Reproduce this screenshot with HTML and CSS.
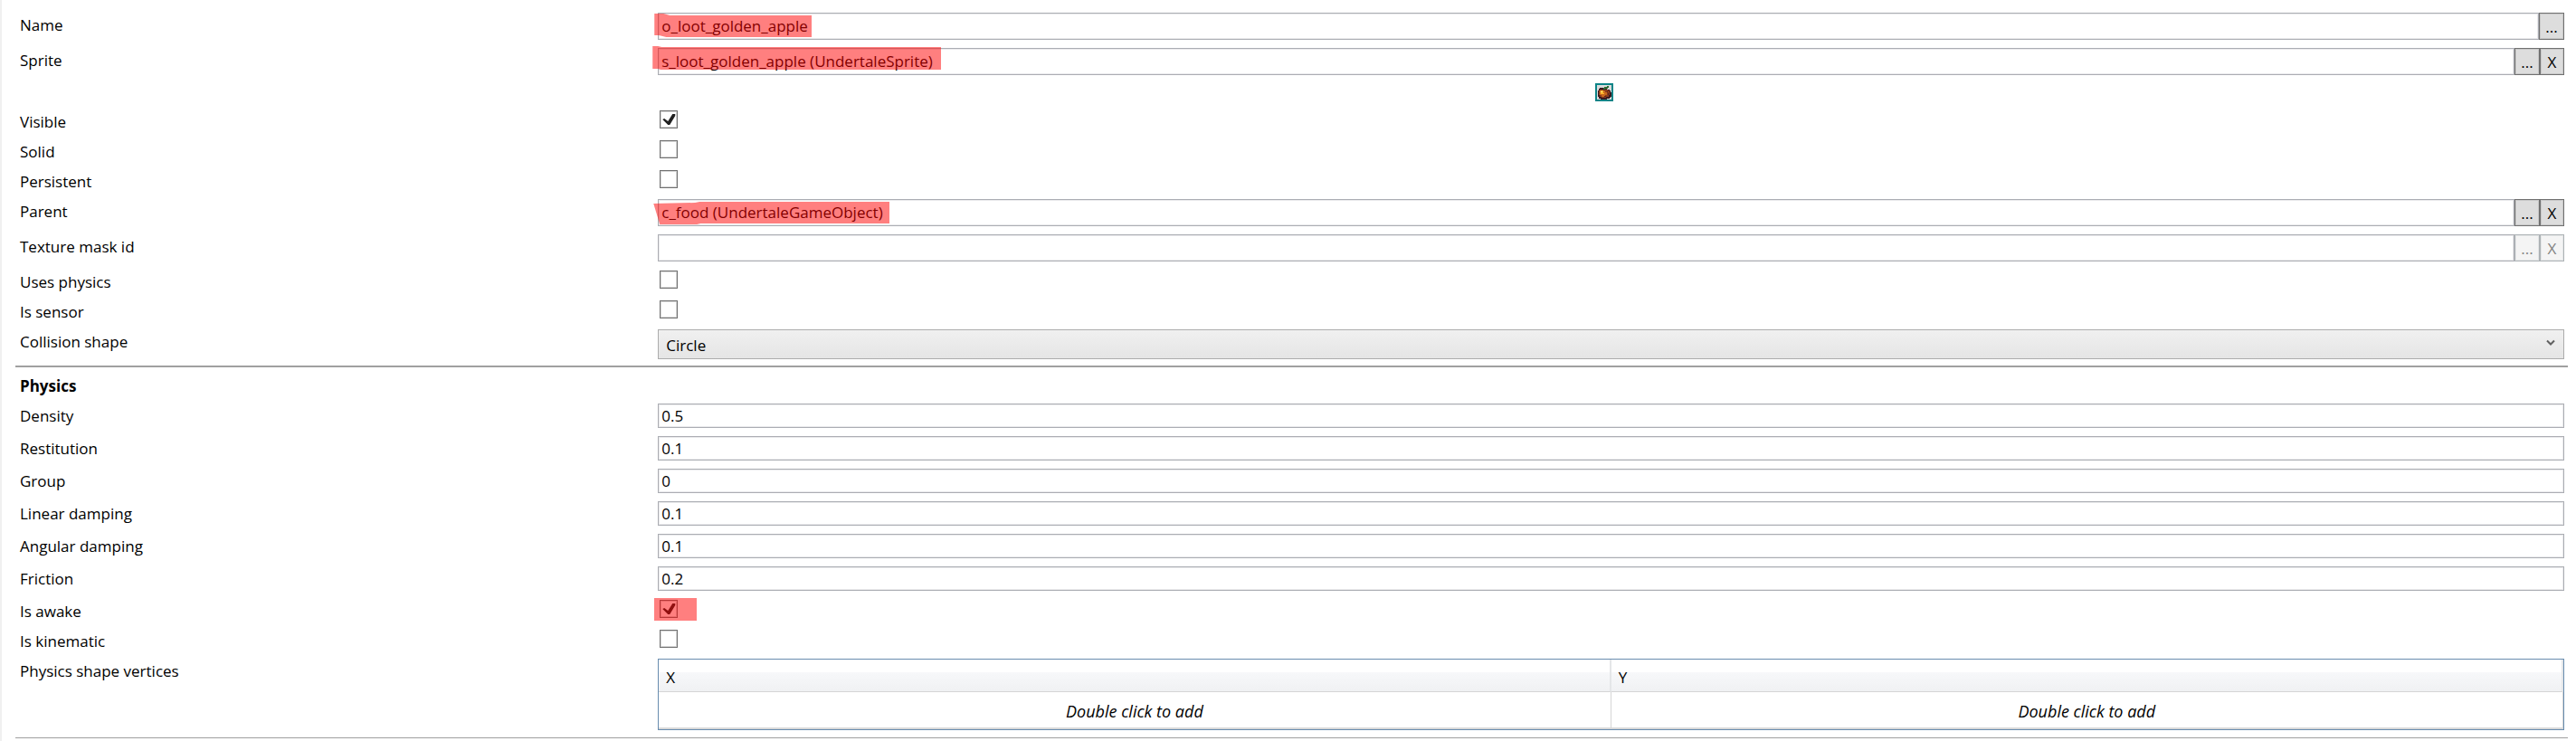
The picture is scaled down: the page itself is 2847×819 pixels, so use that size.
FILE: index.html
```
<!doctype html>
<html lang="en">
<head>
    <meta charset="UTF-8">
    <meta name="viewport" content="width=device-width, initial-scale=1.0">
    <title>Game object editor</title>
    <link rel="stylesheet" href="styles.css">
</head>
<body>
<form class="editor">
    <div class="section">
        <div class="row">
            <label for="name">Name</label>
            <div class="field">
                <input type="text" id="name" value="o_loot_golden_apple">
                <button type="button">...</button>
                <span class="mark mark_name"></span>
            </div>
        </div>
        <div class="row">
            <label for="sprite">Sprite</label>
            <div class="field">
                <input type="text" id="sprite" value="s_loot_golden_apple (UndertaleSprite)" readonly>
                <button type="button">...</button>
                <button type="button" class="remove">X</button>
                <span class="mark mark_sprite"></span>
            </div>
        </div>
        <div class="row">
            <span></span>
            <div class="field preview">
                <svg width="20" height="20" viewBox="0 0 20 20" shape-rendering="crispEdges" aria-label="Golden apple">
                    <path fill="#0c8487" d="M0 0h20v20H0z"/>
                    <path fill="#dcdcdc" d="M2 2h16v16H2z"/>
                    <path fill="#3b1a20" d="M5 5h4v1h4v1h3v1h1v2h1v5h-1v1h-1v1h-3v1H6v-1H4v-2H3V8h1V6h1z"/>
                    <path fill="#8a3a1c" d="M5 7h9v1h2v5h-1v2h-3v1H7v-1H5v-2H4V8h1z"/>
                    <path fill="#c8681e" d="M5 8h6v2h2v3h-2v2H7v-2H5z"/>
                    <path fill="#ffb52c" d="M6 8h3v3h1v1H6z"/>
                    <path fill="#ffe27a" d="M6 9h2v1H6z"/>
                    <path fill="#5a2418" d="M9 7h2v1H9zM13 9h1v1h-1zM14 11h1v2h-1zM10 14h2v1h-2z"/>
                    <path fill="#2f6b35" d="M9 5h1V4h3V3h2v2h-1v1h-3v1H9z"/>
                </svg>
            </div>
        </div>
        <div class="row">
            <label for="visible">Visible</label>
            <div class="field"><input type="checkbox" id="visible" checked></div>
        </div>
        <div class="row">
            <label for="solid">Solid</label>
            <div class="field"><input type="checkbox" id="solid"></div>
        </div>
        <div class="row">
            <label for="persistent">Persistent</label>
            <div class="field"><input type="checkbox" id="persistent"></div>
        </div>
        <div class="row">
            <label for="parent">Parent</label>
            <div class="field">
                <input type="text" id="parent" value="c_food (UndertaleGameObject)" readonly>
                <button type="button">...</button>
                <button type="button" class="remove">X</button>
                <span class="mark mark_parent"></span>
            </div>
        </div>
        <div class="row">
            <label for="mask">Texture mask id</label>
            <div class="field">
                <input type="text" id="mask" readonly>
                <button type="button" disabled>...</button>
                <button type="button" class="remove" disabled>X</button>
            </div>
        </div>
        <div class="row">
            <label for="physics">Uses physics</label>
            <div class="field"><input type="checkbox" id="physics"></div>
        </div>
        <div class="row">
            <label for="sensor">Is sensor</label>
            <div class="field"><input type="checkbox" id="sensor"></div>
        </div>
        <div class="row">
            <label for="shape">Collision shape</label>
            <div class="field">
                <select id="shape">
                    <option selected>Circle</option>
                    <option>Box</option>
                    <option>Custom</option>
                </select>
                <svg class="arrow" width="10" height="8" viewBox="0 0 10 8">
                    <path d="M1 1.500l4 4 4-4" fill="none" stroke="#606060" stroke-width="2"/>
                </svg>
            </div>
        </div>
    </div>

    <hr>

    <div class="section">
        <h2>Physics</h2>
        <div class="row">
            <label for="density">Density</label>
            <div class="field"><input type="text" class="number" id="density" value="0.5"></div>
        </div>
        <div class="row">
            <label for="restitution">Restitution</label>
            <div class="field"><input type="text" class="number" id="restitution" value="0.1"></div>
        </div>
        <div class="row">
            <label for="group">Group</label>
            <div class="field"><input type="text" class="number" id="group" value="0"></div>
        </div>
        <div class="row">
            <label for="linear">Linear damping</label>
            <div class="field"><input type="text" class="number" id="linear" value="0.1"></div>
        </div>
        <div class="row">
            <label for="angular">Angular damping</label>
            <div class="field"><input type="text" class="number" id="angular" value="0.1"></div>
        </div>
        <div class="row">
            <label for="friction">Friction</label>
            <div class="field"><input type="text" class="number" id="friction" value="0.2"></div>
        </div>
        <div class="row">
            <label for="awake">Is awake</label>
            <div class="field">
                <input type="checkbox" id="awake" checked>
                <span class="mark mark_awake"></span>
            </div>
        </div>
        <div class="row">
            <label for="kinematic">Is kinematic</label>
            <div class="field"><input type="checkbox" id="kinematic"></div>
        </div>
        <div class="row">
            <span class="label" id="vertices">Physics shape vertices</span>
            <div class="field">
                <table aria-labelledby="vertices">
                    <thead>
                    <tr>
                        <th>X</th>
                        <th>Y</th>
                    </tr>
                    </thead>
                    <tbody>
                    <tr>
                        <td>Double click to add</td>
                        <td>Double click to add</td>
                    </tr>
                    </tbody>
                </table>
            </div>
        </div>
    </div>

    <hr class="thin">
</form>
</body>
</html>
```
FILE: styles.css
```
* {
    box-sizing: border-box;
}

body {
    margin: 0;
    background: #fff;
    color: #000;
    font-family: "Open Sans", "Noto Sans", sans-serif;
    font-size: 17px;
    line-height: 24px;
}

.editor {
    min-height: 100vh;
    padding: 14px 9px 0 15px;
    border-left: 2px solid #f0f0f0;
}

.section {
    display: flex;
    flex-direction: column;
    gap: 9px;
}

.row {
    display: grid;
    grid-template-columns: minmax(0, 1fr) minmax(0, 3fr);
}

.row > * {
    margin: 0 4px 0 5px;
}

label,
.label,
h2 {
    height: 24px;
    padding-top: 2px;
}

.field {
    position: relative;
    display: flex;
    min-height: 20px;
}

h2 {
    margin: 0 5px;
    font-size: 17px;
    font-weight: 700;
    line-height: 24px;
}

hr {
    height: 2px;
    margin: 7px 0;
    border: 0;
    background: #a0a0a0;
}

hr.thin {
    height: 1px;
    margin: 8px 0 0;
}

input,
select,
button {
    margin: 0;
    color: inherit;
    font: inherit;
    border-radius: 0;
}

input[type="text"] {
    flex: 1;
    min-width: 0;
    height: 30px;
    padding: 0 3px 2px;
    background: #fff;
    border: 1px solid #abadb3;
    box-shadow: inset 0 0 0 1px #eaeaec;
    outline: 0;
}

input[type="text"].number {
    height: 27px;
    padding-bottom: 0;
}

button {
    width: 28px;
    height: 30px;
    padding: 2px 0 0;
    background: #ddd;
    border: 1px solid #707070;
    box-shadow: inset 0 0 0 1px #c8c8c8;
}

button.remove {
    width: 27px;
}

button:disabled {
    color: #838383;
    background: #f4f4f4;
    border-color: #adb2b5;
    box-shadow: inset 0 0 0 1px #e4e6e7;
}

input[type="checkbox"] {
    appearance: none;
    width: 20px;
    height: 20px;
    margin: 1px 2px 3px;
    background: #fff;
    border: 1px solid #707070;
    box-shadow: inset 0 0 0 1px #d6d6d6;
}

input[type="checkbox"]:checked::before {
    content: "";
    display: block;
    width: 18px;
    height: 18px;
    background: #212121;
    clip-path: polygon(2px 9px, 4px 8px, 8px 11px, 13px 3px, 16px 3px, 16px 5px, 10px 15px, 8px 15px);
}

select {
    appearance: none;
    width: 100%;
    height: 33px;
    padding: 3px 8px 0;
    background: linear-gradient(#f0f0f0, #e5e5e5);
    border: 1px solid #acacac;
}

.arrow {
    position: absolute;
    top: 11px;
    right: 10px;
    pointer-events: none;
}

.preview {
    justify-content: center;
    padding-right: 15px;
}

table {
    width: 100%;
    border: 1px solid #688caf;
    border-collapse: separate;
    border-spacing: 0;
    table-layout: fixed;
}

th {
    height: 36px;
    padding: 4px 8px 0;
    font-weight: 400;
    text-align: left;
    background: linear-gradient(#fff 40%, #f7f8fa 40%, #f0f1f3);
    border-right: 2px solid #e4e6e8;
    border-bottom: 1px solid #d5d5d5;
}

td {
    height: 41px;
    padding: 2px 0 0;
    font-size: 18px;
    font-style: italic;
    text-align: center;
    border-right: 1px solid #d5d5d5;
    border-bottom: 2px solid #d9d9d9;
}

/* translucent marker strokes over the important values */
.mark {
    position: absolute;
    background: rgba(255, 0, 0, 0.5);
    pointer-events: none;
}

.mark_name {
    top: 1px;
    left: -4px;
    width: 174px;
    height: 27px;
    clip-path: polygon(0 0, 10px 0, 17px 2px, 100% 2px, 100% 26px, 13px 26px, 5px 24px, 0 24px);
}

.mark_sprite {
    top: -2px;
    left: -6px;
    width: 319px;
    height: 26px;
    clip-path: polygon(0 0, 6px 0, 10px 1px, 100% 1px, 100% 26px, 9px 26px, 6px 25px, 0 25px);
}

.mark_parent {
    top: 2px;
    left: -5px;
    width: 261px;
    height: 26px;
    clip-path: polygon(0 3px, 46px 2px, 51px 1px, 100% 1px, 100% 25px, 52px 25px, 48px 26px, 7px 26px);
}

.mark_awake {
    top: -1px;
    left: -4px;
    width: 47px;
    height: 25px;
}
```
